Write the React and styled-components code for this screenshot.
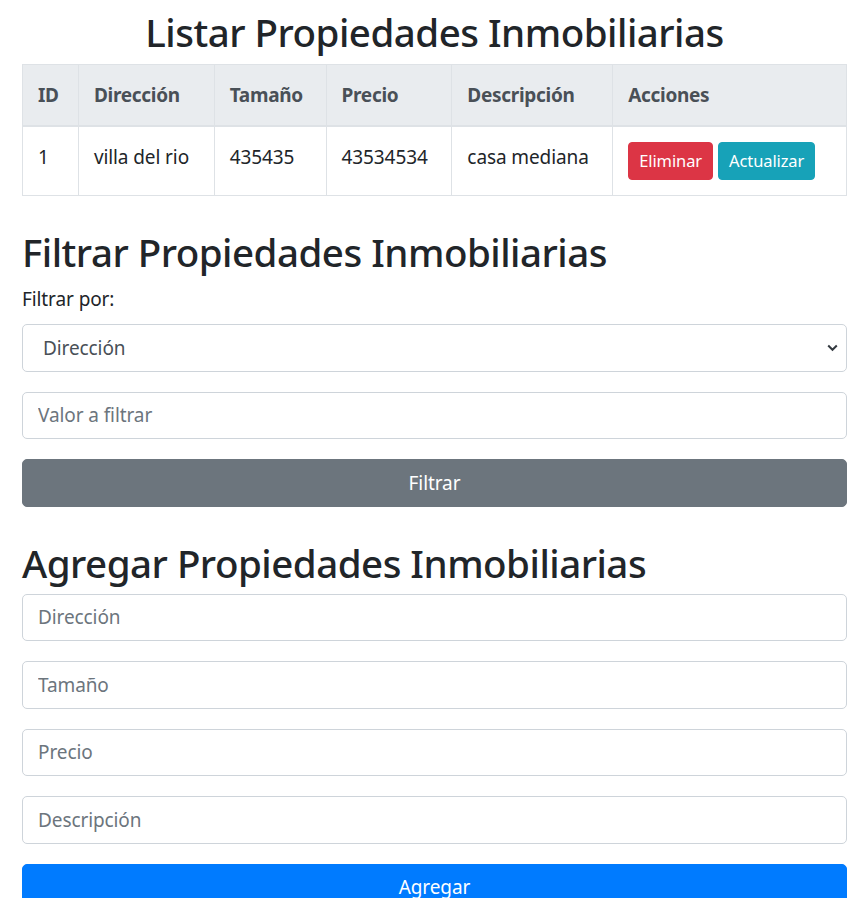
import React from "react";
import styled, { createGlobalStyle } from "styled-components";

const Global = createGlobalStyle`
  html, body { margin: 0; padding: 0; background: #fff; }
  body {
    font-family: "Noto Sans", "Open Sans", sans-serif;
    font-size: 19px;
    letter-spacing: -0.1px;
    line-height: 1.5;
    color: #212529;
  }
  * { box-sizing: border-box; }
`;

const Page = styled.div`
  padding: 0 18px 0 22px;
`;

const Heading = styled.h2`
  margin: ${(p) => p.$top}px 0 ${(p) => p.$bottom}px;
  font-size: 38.5px;
  letter-spacing: -0.5px;
  line-height: 48px;
  font-weight: 500;
  text-align: ${(p) => (p.$center ? "center" : "left")};
  color: #212529;
`;

const Table = styled.table`
  width: 100%;
  border-collapse: collapse;
  margin-bottom: 20px;
  color: #212529;
`;

const Th = styled.th`
  width: ${(p) => p.$w}px;
  padding: 15px;
  text-align: left;
  vertical-align: bottom;
  font-weight: 700;
  letter-spacing: -0.3px;
  color: #495057;
  background: #e9ecef;
  border: 1px solid #dee2e6;
  border-bottom: 2px solid #dee2e6;
  line-height: 30px;
`;

const Td = styled.td`
  padding: 15px;
  vertical-align: top;
  border: 1px solid #dee2e6;
  line-height: 30px;
  white-space: nowrap;
`;

const SmallButton = styled.button`
  display: inline-block;
  font-family: inherit;
  font-size: 16.5px;
  letter-spacing: -0.1px;
  line-height: 26px;
  padding: 5px 10px;
  border: 1px solid ${(p) => p.$bg};
  border-radius: 4px;
  background: ${(p) => p.$bg};
  color: #fff;
  margin-right: 5px;
  vertical-align: middle;
`;

const Label = styled.label`
  display: block;
  margin-bottom: 10px;
  line-height: 30px;
`;

const Group = styled.div`
  margin-bottom: 20px;
`;

const SelectWrap = styled.div`
  position: relative;
`;

const Select = styled.select`
  display: block;
  width: 100%;
  height: 47.5px;
  padding: 6px 15px 6px 20px;
  font-family: inherit;
  font-size: 19px;
  letter-spacing: -0.1px;
  color: #495057;
  background: #fff;
  border: 1px solid #ced4da;
  border-radius: 5px;
  appearance: none;
  -webkit-appearance: none;
  outline: none;
`;

const Chevron = styled.svg`
  position: absolute;
  right: 9px;
  top: 20px;
  width: 11px;
  height: 8px;
  pointer-events: none;
`;

const Input = styled.input`
  display: block;
  width: 100%;
  height: 47.5px;
  padding: 7.5px 15px;
  font-family: inherit;
  font-size: 19px;
  letter-spacing: -0.1px;
  color: #495057;
  background: #fff;
  border: 1px solid #ced4da;
  border-radius: 5px;
  outline: none;
  &::placeholder { color: #6c757d; opacity: 1; }
`;

const BlockButton = styled.button`
  display: block;
  width: 100%;
  height: 47.5px;
  padding: 7.5px 15px;
  font-family: inherit;
  font-size: 19px;
  letter-spacing: -0.1px;
  line-height: 30px;
  color: #fff;
  background: ${(p) => p.$bg};
  border: 1px solid ${(p) => p.$bg};
  border-radius: 5px;
  text-align: center;
`;

const columns = [
  { label: "ID", w: 56 },
  { label: "Dirección", w: 136 },
  { label: "Tamaño", w: 112 },
  { label: "Precio", w: 126 },
  { label: "Descripción", w: 161 },
  { label: "Acciones", w: 234 },
];

const rows = [
  { id: 1, dir: "villa del rio", tam: "435435", precio: "43534534", desc: "casa mediana" },
];

export default function App() {
  return (
    <Page>
      <Global />
      <Heading $center $top={8} $bottom={8}>
        Listar Propiedades Inmobiliarias
      </Heading>
      <Table>
        <thead>
          <tr>
            {columns.map((c) => (
              <Th key={c.label} $w={c.w}>
                {c.label}
              </Th>
            ))}
          </tr>
        </thead>
        <tbody>
          {rows.map((r) => (
            <tr key={r.id}>
              <Td>{r.id}</Td>
              <Td>{r.dir}</Td>
              <Td>{r.tam}</Td>
              <Td>{r.precio}</Td>
              <Td>{r.desc}</Td>
              <Td>
                <SmallButton $bg="#dc3545">Eliminar</SmallButton>
                <SmallButton $bg="#17a2b8">Actualizar</SmallButton>
              </Td>
            </tr>
          ))}
        </tbody>
      </Table>

      <Heading $top={32} $bottom={8}>Filtrar Propiedades Inmobiliarias</Heading>
      <Group>
        <Label>Filtrar por:</Label>
        <SelectWrap>
          <Select defaultValue="direccion">
            <option value="direccion">Dirección</option>
            <option value="tamano">Tamaño</option>
            <option value="precio">Precio</option>
            <option value="descripcion">Descripción</option>
          </Select>
          <Chevron viewBox="0 0 11 8">
            <path d="M1.2 1.5 L5.5 5.8 L9.8 1.5" fill="none" stroke="#343a40" strokeWidth="2" />
          </Chevron>
        </SelectWrap>
      </Group>
      <Group>
        <Input placeholder="Valor a filtrar" />
      </Group>
      <Group>
        <BlockButton $bg="#6c757d">Filtrar</BlockButton>
      </Group>

      <Heading $top={32} $bottom={7}>Agregar Propiedades Inmobiliarias</Heading>
      <Group>
        <Input placeholder="Dirección" />
      </Group>
      <Group>
        <Input placeholder="Tamaño" />
      </Group>
      <Group>
        <Input placeholder="Precio" />
      </Group>
      <Group>
        <Input placeholder="Descripción" />
      </Group>
      <Group>
        <BlockButton $bg="#007bff">Agregar</BlockButton>
      </Group>
    </Page>
  );
}
